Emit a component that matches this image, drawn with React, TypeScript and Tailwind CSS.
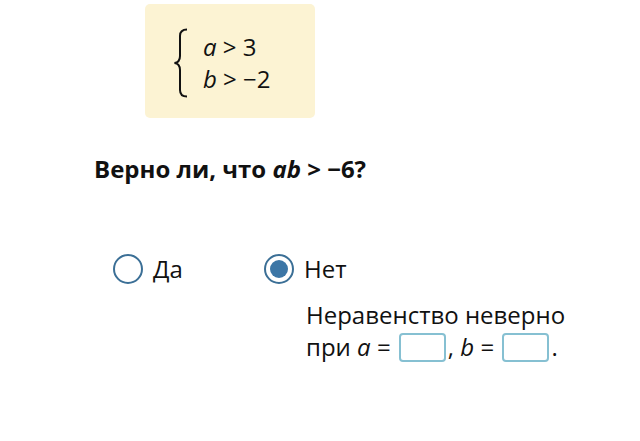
import React from 'react'

function Brace() {
  return (
    <svg width="16" height="70" viewBox="0 0 16 70" className="shrink-0">
      <path
        d="M14 1.5 C9 1.5 7 3.5 7 8 L7 28 C7 32 5 34.5 1.5 35 C5 35.5 7 38 7 42 L7 62 C7 66.5 9 68.5 14 68.5"
        fill="none"
        stroke="#111"
        strokeWidth="2"
      />
    </svg>
  )
}

function Radio({ checked }: { checked?: boolean }) {
  return (
    <span className="grid h-[30px] w-[30px] shrink-0 place-items-center rounded-full border-2 border-[#3b6f96] bg-white">
      {checked && <span className="h-[18px] w-[18px] rounded-full bg-[#3c76a6]" />}
    </span>
  )
}

function Box() {
  return <span className="mx-[2px] inline-block h-[29px] w-[47px] rounded-[4px] border-2 border-[#86c0d2] bg-white align-[-6px]" />
}

export default function App() {
  return (
    <div className="h-[441px] w-[640px] bg-white text-[#111]" style={{ fontFamily: '"Open Sans", sans-serif' }}>
      <div className="pt-[4px] pl-[145px]">
        <div className="flex h-[114px] w-[170px] items-center gap-[14px] rounded-[5px] bg-[#fcf3d3] pl-[28px] pt-[4px]">
          <Brace />
          <div className="text-[24px] leading-[32px]">
            <div><i>a</i> &gt; 3</div>
            <div><i>b</i> &gt; −2</div>
          </div>
        </div>
      </div>

      <p className="mt-[35px] pl-[94px] text-[24px] font-bold leading-[32px]">
        Верно ли, что <i>ab</i> &gt; −6?
      </p>

      <div className="mt-[68px] flex items-start pl-[113px]">
        <div className="flex w-[151px] items-center gap-[10px]">
          <Radio />
          <span className="text-[24px] leading-[32px]">Да</span>
        </div>
        <div>
          <div className="flex items-center gap-[10px]">
            <Radio checked />
            <span className="text-[24px] leading-[32px]">Нет</span>
          </div>
          <div className="mt-[14px] pl-[42px] text-[24px] leading-[32px]">
            <div>Неравенство неверно</div>
            <div>
              при <i>a</i> = <Box />, <i>b</i> = <Box />.
            </div>
          </div>
        </div>
      </div>
    </div>
  )
}
